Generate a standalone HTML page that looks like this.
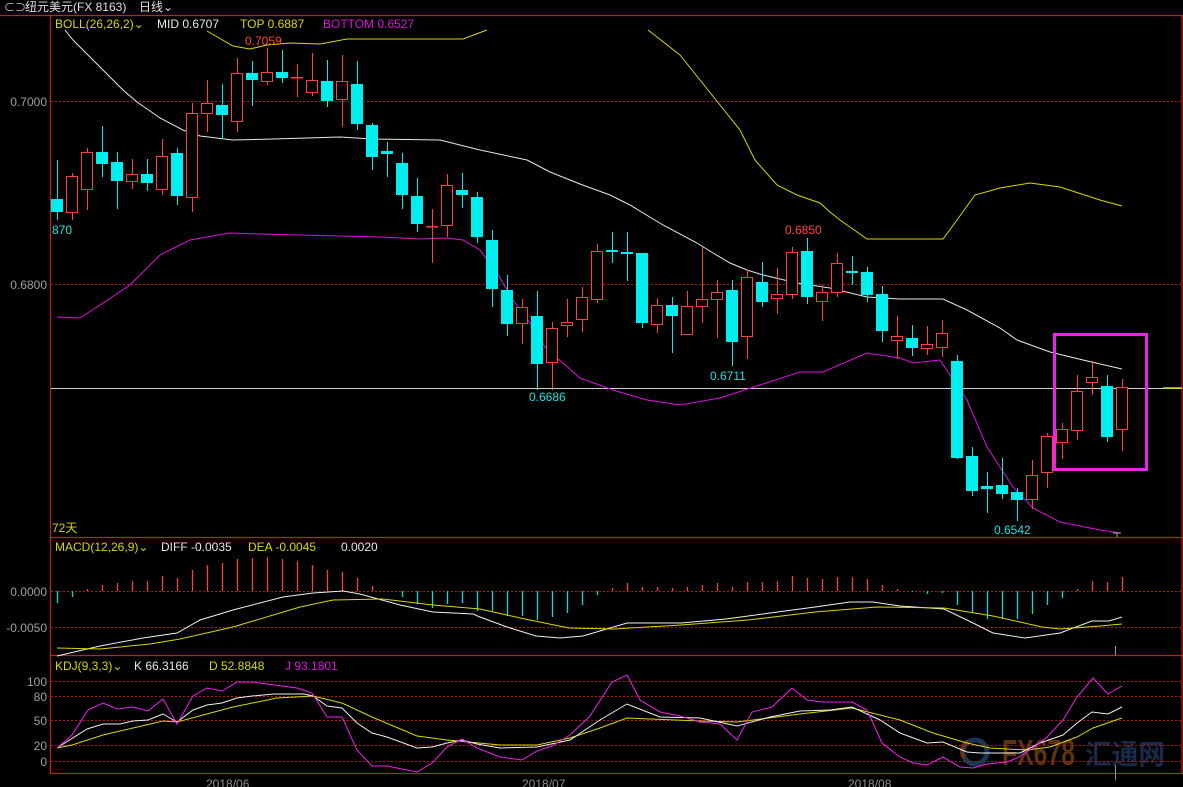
<!DOCTYPE html>
<html><head><meta charset="utf-8"><style>
html,body{margin:0;padding:0;background:#000;width:1183px;height:787px;overflow:hidden}
svg{display:block}
text{font-family:"Liberation Sans","Noto Sans CJK SC",sans-serif;font-size:12px}
</style></head><body>
<svg width="1183" height="787" viewBox="0 0 1183 787" xmlns="http://www.w3.org/2000/svg">
<rect width="1183" height="787" fill="#000"/>
<text x="4" y="11" fill="#c8c8c8" style="font-size:11px">⊂⊃</text>
<text x="25" y="11" fill="#e0e0e0">纽元美元(FX 8163)</text>
<text x="139" y="11" fill="#e0e0e0">日线⌄</text>
<!-- watermark (behind) -->
<g>
<circle cx="975" cy="752" r="12" fill="none" stroke="#1a3458" stroke-width="5"/>
<path d="M964,758 A12,12 0 0 1 968,741" fill="none" stroke="#6a3410" stroke-width="4"/>
<text x="1002" y="765" fill="#5e3210" textLength="73" lengthAdjust="spacingAndGlyphs" style="font-size:36px;font-weight:bold">FX678</text>
<text x="1085" y="764" fill="#182a48" textLength="80" lengthAdjust="spacingAndGlyphs" style="font-size:28px;font-weight:bold">汇通网</text>
</g>
<g stroke="#c81e1e" stroke-width="1.2" fill="none">
<line x1="0" y1="15.5" x2="1183" y2="15.5"/>
<line x1="50.5" y1="15" x2="50.5" y2="773"/>
<line x1="1182" y1="15" x2="1182" y2="773"/>
<line x1="50" y1="537.5" x2="1183" y2="537.5"/>
<line x1="50" y1="655.5" x2="1183" y2="655.5"/>
<line x1="50" y1="773.5" x2="1183" y2="773.5"/>
</g>
<g stroke="#b01818" stroke-width="1" stroke-dasharray="2,2">
<line x1="51" y1="101.5" x2="1182" y2="101.5"/>
<line x1="51" y1="284.5" x2="1182" y2="284.5"/>
<line x1="51" y1="591.5" x2="1182" y2="591.5"/>
<line x1="51" y1="627.5" x2="1182" y2="627.5"/>
<line x1="51" y1="681.5" x2="1182" y2="681.5"/>
<line x1="51" y1="696.5" x2="1182" y2="696.5"/>
<line x1="51" y1="720.5" x2="1182" y2="720.5"/>
<line x1="51" y1="745.5" x2="1182" y2="745.5"/>
<line x1="51" y1="761.5" x2="1182" y2="761.5"/>
</g>
<g fill="#a0a0a0" text-anchor="end">
<text x="47" y="106">0.7000</text>
<text x="47" y="289">0.6800</text>
<text x="47" y="596">0.0000</text>
<text x="47" y="632">-0.0050</text>
<text x="47" y="686">100</text>
<text x="47" y="701">80</text>
<text x="47" y="725">50</text>
<text x="47" y="750">20</text>
<text x="47" y="766">0</text>
</g>
<g fill="#909090">
<text x="206" y="788">2018/06</text>
<text x="522" y="788">2018/07</text>
<text x="848" y="788">2018/08</text>
</g>
<line x1="51" y1="388.5" x2="1182" y2="388.5" stroke="#d0d0d0" stroke-width="1"/>
<line x1="1163" y1="388" x2="1182" y2="388" stroke="#d8d800" stroke-width="1.5"/>
<polyline fill="none" stroke="#e8e8e8" stroke-width="1" points="65,30 73,40 93,60 123,90 137,102 160,118 183,130 200,136 233,140 273,139 340,137 373,139 440,140 480,150 527,160 550,172 580,184 610,195 630,205 663,225 697,243 713,253 730,263 747,270 763,275 797,283 830,288 867,297 900,299 943,299 967,310 1000,328 1017,340 1050,352 1083,360 1122,369"/>
<polyline fill="none" stroke="#d8d800" stroke-width="1" points="207,31 233,46 250,49 267,45 290,43 320,44 347,39 420,39 463,39 487,30"/>
<polyline fill="none" stroke="#d8d800" stroke-width="1" points="648,30 680,55 700,80 720,105 740,130 755,160 777,185 797,195 820,203 830,212 840,220 867,239 943,239 957,220 975,195 1000,188 1030,183 1060,187 1100,200 1122,206"/>
<polyline fill="none" stroke="#e010e0" stroke-width="1" points="57,317 80,318 100,305 130,285 160,255 190,240 230,233 260,234 300,235 380,237 420,239 447,238 463,240 480,250 497,273 513,300 530,323 547,350 563,363 580,378 613,390 647,400 680,405 720,398 760,385 800,372 823,372 867,353 900,358 913,363 940,360 967,400 987,447 1013,487 1033,508 1060,522 1100,530 1120,533"/>
<line x1="1117" y1="533" x2="1117" y2="537" stroke="#aaa"/>
<line x1="1113" y1="533" x2="1121" y2="533" stroke="#aaa"/>
<g stroke-width="1">
<g stroke="#00eeee">
<line x1="57.5" y1="160" x2="57.5" y2="220"/><line x1="102.5" y1="126" x2="102.5" y2="177"/><line x1="117.5" y1="152" x2="117.5" y2="209"/><line x1="147.5" y1="159" x2="147.5" y2="191"/><line x1="177.5" y1="148" x2="177.5" y2="205"/><line x1="222.5" y1="84" x2="222.5" y2="139"/><line x1="252.5" y1="61" x2="252.5" y2="106"/><line x1="282.5" y1="50" x2="282.5" y2="83"/><line x1="327.5" y1="60" x2="327.5" y2="107"/><line x1="357.5" y1="61" x2="357.5" y2="130"/><line x1="372.5" y1="123" x2="372.5" y2="170"/><line x1="387.5" y1="142" x2="387.5" y2="177"/><line x1="402.5" y1="153" x2="402.5" y2="209"/><line x1="417.5" y1="178" x2="417.5" y2="232"/><line x1="462.5" y1="173" x2="462.5" y2="208"/><line x1="477.5" y1="192" x2="477.5" y2="243"/><line x1="492.5" y1="230" x2="492.5" y2="307"/><line x1="507.5" y1="275" x2="507.5" y2="336"/><line x1="537.5" y1="291" x2="537.5" y2="390"/><line x1="612.5" y1="232" x2="612.5" y2="263"/><line x1="627.5" y1="232" x2="627.5" y2="281"/><line x1="642.5" y1="253" x2="642.5" y2="328"/><line x1="672.5" y1="297" x2="672.5" y2="353"/><line x1="732.5" y1="280" x2="732.5" y2="366"/><line x1="762.5" y1="262" x2="762.5" y2="307"/><line x1="807.5" y1="238" x2="807.5" y2="304"/><line x1="852.5" y1="256" x2="852.5" y2="285"/><line x1="867.5" y1="267" x2="867.5" y2="302"/><line x1="882.5" y1="286" x2="882.5" y2="342"/><line x1="912.5" y1="325" x2="912.5" y2="356"/><line x1="957.5" y1="355" x2="957.5" y2="459"/><line x1="972.5" y1="447" x2="972.5" y2="496"/><line x1="987.5" y1="472" x2="987.5" y2="513"/><line x1="1002.5" y1="458" x2="1002.5" y2="499"/><line x1="1017.5" y1="488" x2="1017.5" y2="521"/><line x1="1107.5" y1="375" x2="1107.5" y2="442"/>
</g>
<g stroke="#ff4040">
<line x1="72.5" y1="173" x2="72.5" y2="220"/><line x1="87.5" y1="148" x2="87.5" y2="210"/><line x1="132.5" y1="159" x2="132.5" y2="189"/><line x1="162.5" y1="139" x2="162.5" y2="195"/><line x1="192.5" y1="103" x2="192.5" y2="212"/><line x1="207.5" y1="80" x2="207.5" y2="132"/><line x1="237.5" y1="58" x2="237.5" y2="132"/><line x1="267.5" y1="48" x2="267.5" y2="85"/><line x1="297.5" y1="64" x2="297.5" y2="97"/><line x1="312.5" y1="53" x2="312.5" y2="96"/><line x1="342.5" y1="55" x2="342.5" y2="127"/><line x1="432.5" y1="209" x2="432.5" y2="263"/><line x1="447.5" y1="174" x2="447.5" y2="237"/><line x1="522.5" y1="299" x2="522.5" y2="344"/><line x1="552.5" y1="322" x2="552.5" y2="390"/><line x1="567.5" y1="299" x2="567.5" y2="337"/><line x1="582.5" y1="287" x2="582.5" y2="332"/><line x1="597.5" y1="244" x2="597.5" y2="303"/><line x1="657.5" y1="298" x2="657.5" y2="333"/><line x1="687.5" y1="291" x2="687.5" y2="334"/><line x1="702.5" y1="247" x2="702.5" y2="323"/><line x1="717.5" y1="280" x2="717.5" y2="338"/><line x1="747.5" y1="270" x2="747.5" y2="359"/><line x1="777.5" y1="268" x2="777.5" y2="314"/><line x1="792.5" y1="247" x2="792.5" y2="299"/><line x1="822.5" y1="285" x2="822.5" y2="321"/><line x1="837.5" y1="253" x2="837.5" y2="297"/><line x1="897.5" y1="316" x2="897.5" y2="359"/><line x1="927.5" y1="326" x2="927.5" y2="355"/><line x1="942.5" y1="320" x2="942.5" y2="357"/><line x1="1032.5" y1="460" x2="1032.5" y2="509"/><line x1="1047.5" y1="433" x2="1047.5" y2="488"/><line x1="1062.5" y1="423" x2="1062.5" y2="459"/><line x1="1077.5" y1="375" x2="1077.5" y2="440"/><line x1="1092.5" y1="361" x2="1092.5" y2="395"/><line x1="1122.5" y1="379" x2="1122.5" y2="451"/>
</g>
</g>
<g fill="#00eeee">
<rect x="51" y="199" width="12" height="13"/><rect x="96" y="152" width="12" height="12"/><rect x="111" y="162" width="12" height="19"/><rect x="141" y="174" width="12" height="9"/><rect x="171" y="153" width="12" height="43"/><rect x="216" y="105" width="12" height="10"/><rect x="246" y="73" width="12" height="7"/><rect x="276" y="72" width="12" height="6"/><rect x="321" y="81" width="12" height="20"/><rect x="351" y="84" width="12" height="40"/><rect x="366" y="125" width="12" height="32"/><rect x="381" y="151" width="12" height="3"/><rect x="396" y="163" width="12" height="32"/><rect x="411" y="196" width="12" height="28"/><rect x="456" y="190" width="12" height="5"/><rect x="471" y="197" width="12" height="40"/><rect x="486" y="240" width="12" height="49"/><rect x="501" y="290" width="12" height="34"/><rect x="531" y="316" width="12" height="48"/><rect x="606" y="250" width="12" height="2"/><rect x="621" y="252" width="12" height="2"/><rect x="636" y="253" width="12" height="70"/><rect x="666" y="305" width="12" height="11"/><rect x="726" y="290" width="12" height="52"/><rect x="756" y="282" width="12" height="20"/><rect x="801" y="251" width="12" height="46"/><rect x="846" y="271" width="12" height="2"/><rect x="861" y="272" width="12" height="23"/><rect x="876" y="294" width="12" height="37"/><rect x="906" y="338" width="12" height="10"/><rect x="951" y="361" width="12" height="97"/><rect x="966" y="456" width="12" height="35"/><rect x="981" y="486" width="12" height="3"/><rect x="996" y="485" width="12" height="9"/><rect x="1011" y="492" width="12" height="8"/><rect x="1101" y="386" width="12" height="51"/>
</g>
<g fill="#000" stroke="#ff4040" stroke-width="1">
<rect x="66.5" y="176.5" width="11" height="36"/><rect x="81.5" y="152.5" width="11" height="37"/><rect x="126.5" y="174.5" width="11" height="7"/><rect x="156.5" y="156.5" width="11" height="33"/><rect x="186.5" y="113.5" width="11" height="84"/><rect x="201.5" y="103.5" width="11" height="10"/><rect x="231.5" y="73.5" width="11" height="48"/><rect x="261.5" y="72.5" width="11" height="9"/><rect x="291.5" y="77.5" width="11" height="0.5"/><rect x="306.5" y="80.5" width="11" height="12"/><rect x="336.5" y="81.5" width="11" height="18"/><rect x="426.5" y="226.5" width="11" height="0.5"/><rect x="441.5" y="185.5" width="11" height="40"/><rect x="516.5" y="307.5" width="11" height="16"/><rect x="546.5" y="328.5" width="11" height="34"/><rect x="561.5" y="322.5" width="11" height="3"/><rect x="576.5" y="297.5" width="11" height="22"/><rect x="591.5" y="251.5" width="11" height="48"/><rect x="651.5" y="305.5" width="11" height="19"/><rect x="681.5" y="306.5" width="11" height="28"/><rect x="696.5" y="299.5" width="11" height="7"/><rect x="711.5" y="292.5" width="11" height="7"/><rect x="741.5" y="277.5" width="11" height="59"/><rect x="771.5" y="294.5" width="11" height="4"/><rect x="786.5" y="252.5" width="11" height="42"/><rect x="816.5" y="292.5" width="11" height="9"/><rect x="831.5" y="263.5" width="11" height="29"/><rect x="891.5" y="336.5" width="11" height="4"/><rect x="921.5" y="344.5" width="11" height="4"/><rect x="936.5" y="333.5" width="11" height="14"/><rect x="1026.5" y="475.5" width="11" height="24"/><rect x="1041.5" y="436.5" width="11" height="36"/><rect x="1056.5" y="429.5" width="11" height="13"/><rect x="1071.5" y="391.5" width="11" height="39"/><rect x="1086.5" y="377.5" width="11" height="5"/><rect x="1116.5" y="387.5" width="11" height="42"/>
</g>
<rect x="1054.5" y="334.5" width="92" height="135" fill="none" stroke="#ee22ee" stroke-width="3"/>
<text x="245" y="45" fill="#ff4040">0.7059</text>
<text x="52" y="234" fill="#20e0e0">870</text>
<text x="529" y="401" fill="#20e0e0">0.6686</text>
<text x="710" y="380" fill="#20e0e0">0.6711</text>
<text x="785" y="234" fill="#ff4040">0.6850</text>
<text x="994" y="534" fill="#20e0e0">0.6542</text>
<text x="52" y="532" fill="#d8d800">72天</text>
<text x="55" y="28" fill="#d8d800">BOLL(26,26,2)⌄</text>
<text x="157" y="28" fill="#e8e8e8">MID 0.6707</text>
<text x="240" y="28" fill="#d8d800">TOP 0.6887</text>
<text x="323" y="28" fill="#e010e0">BOTTOM 0.6527</text>
<text x="55" y="551" fill="#d8d800">MACD(12,26,9)⌄</text>
<text x="161" y="551" fill="#e8e8e8">DIFF -0.0035</text>
<text x="248" y="551" fill="#d8d800">DEA -0.0045</text>
<text x="341" y="551" fill="#e8e8e8">0.0020</text>
<text x="55" y="670" fill="#d8d800">KDJ(9,3,3)⌄</text>
<text x="134" y="670" fill="#e8e8e8">K 66.3166</text>
<text x="209" y="670" fill="#d8d800">D 52.8848</text>
<text x="285" y="670" fill="#e010e0">J 93.1801</text>
<g stroke-width="1.3">
<g stroke="#00dddd">
<line x1="57.5" y1="591" x2="57.5" y2="603"/><line x1="72.5" y1="591" x2="72.5" y2="597"/>
<line x1="402.5" y1="591" x2="402.5" y2="597"/><line x1="417.5" y1="591" x2="417.5" y2="604"/><line x1="432.5" y1="591" x2="432.5" y2="608"/><line x1="447.5" y1="591" x2="447.5" y2="604"/><line x1="462.5" y1="591" x2="462.5" y2="603"/><line x1="477.5" y1="591" x2="477.5" y2="611"/>
<line x1="492.5" y1="591" x2="492.5" y2="611"/><line x1="507.5" y1="591" x2="507.5" y2="616"/><line x1="522.5" y1="591" x2="522.5" y2="616"/><line x1="537.5" y1="591" x2="537.5" y2="620"/><line x1="552.5" y1="591" x2="552.5" y2="617"/><line x1="567.5" y1="591" x2="567.5" y2="613"/><line x1="582.5" y1="591" x2="582.5" y2="605"/><line x1="597.5" y1="591" x2="597.5" y2="595"/>
<line x1="912.5" y1="591" x2="912.5" y2="592"/><line x1="927.5" y1="591" x2="927.5" y2="594"/><line x1="942.5" y1="591" x2="942.5" y2="593"/><line x1="957.5" y1="591" x2="957.5" y2="605"/><line x1="972.5" y1="591" x2="972.5" y2="613"/><line x1="987.5" y1="591" x2="987.5" y2="619"/><line x1="1002.5" y1="591" x2="1002.5" y2="619"/><line x1="1017.5" y1="591" x2="1017.5" y2="619"/><line x1="1032.5" y1="591" x2="1032.5" y2="614"/><line x1="1047.5" y1="591" x2="1047.5" y2="605"/><line x1="1062.5" y1="591" x2="1062.5" y2="598"/>
</g>
<g stroke="#ff4040">
<line x1="87.5" y1="589" x2="87.5" y2="591"/><line x1="102.5" y1="585" x2="102.5" y2="591"/><line x1="117.5" y1="583" x2="117.5" y2="591"/><line x1="132.5" y1="581" x2="132.5" y2="591"/><line x1="147.5" y1="581" x2="147.5" y2="591"/><line x1="162.5" y1="576" x2="162.5" y2="591"/><line x1="177.5" y1="578" x2="177.5" y2="591"/><line x1="192.5" y1="570" x2="192.5" y2="591"/><line x1="207.5" y1="565" x2="207.5" y2="591"/><line x1="222.5" y1="563" x2="222.5" y2="591"/><line x1="237.5" y1="559" x2="237.5" y2="591"/><line x1="252.5" y1="558" x2="252.5" y2="591"/><line x1="267.5" y1="557" x2="267.5" y2="591"/><line x1="282.5" y1="559" x2="282.5" y2="591"/><line x1="297.5" y1="561" x2="297.5" y2="591"/><line x1="312.5" y1="565" x2="312.5" y2="591"/><line x1="327.5" y1="570" x2="327.5" y2="591"/><line x1="342.5" y1="572" x2="342.5" y2="591"/><line x1="357.5" y1="578" x2="357.5" y2="591"/><line x1="372.5" y1="586" x2="372.5" y2="591"/>
<line x1="612.5" y1="588" x2="612.5" y2="591"/><line x1="627.5" y1="583" x2="627.5" y2="591"/><line x1="642.5" y1="587" x2="642.5" y2="591"/><line x1="657.5" y1="587" x2="657.5" y2="591"/><line x1="672.5" y1="588" x2="672.5" y2="591"/><line x1="687.5" y1="587" x2="687.5" y2="591"/><line x1="702.5" y1="585" x2="702.5" y2="591"/><line x1="717.5" y1="583" x2="717.5" y2="591"/><line x1="732.5" y1="587" x2="732.5" y2="591"/><line x1="747.5" y1="582" x2="747.5" y2="591"/><line x1="762.5" y1="582" x2="762.5" y2="591"/><line x1="777.5" y1="581" x2="777.5" y2="591"/><line x1="792.5" y1="576" x2="792.5" y2="591"/><line x1="807.5" y1="578" x2="807.5" y2="591"/><line x1="822.5" y1="579" x2="822.5" y2="591"/><line x1="837.5" y1="577" x2="837.5" y2="591"/><line x1="852.5" y1="577" x2="852.5" y2="591"/><line x1="867.5" y1="579" x2="867.5" y2="591"/><line x1="882.5" y1="585" x2="882.5" y2="591"/><line x1="897.5" y1="589" x2="897.5" y2="591"/>
<line x1="1077.5" y1="589" x2="1077.5" y2="591"/><line x1="1092.5" y1="581" x2="1092.5" y2="591"/><line x1="1107.5" y1="582" x2="1107.5" y2="591"/><line x1="1122.5" y1="577" x2="1122.5" y2="591"/>
</g>
</g>
<line x1="1115.5" y1="646" x2="1115.5" y2="655" stroke="#999"/>
<line x1="1115.5" y1="765" x2="1115.5" y2="780" stroke="#999"/>
<polyline fill="none" stroke="#f0f0f0" stroke-width="1" points="57,656 100,646 143,638 177,633 200,620 233,610 283,597 313,593 343,591 360,594 400,605 433,612 473,614 480,617 507,627 536,636 560,638 583,636 627,623 681,623 726,619 770,613 815,607 850,602 873,602 900,606 944,609 971,622 993,633 1025,638 1060,633 1092,621 1109,621 1122,617"/>
<polyline fill="none" stroke="#d8d800" stroke-width="1" points="57,648 100,649 150,644 180,639 233,627 300,607 333,600 383,599 433,605 480,609 525,619 569,628 614,629 681,625 748,620 815,612 877,607 944,608 993,616 1042,627 1060,629 1100,626 1122,624"/>
<polyline fill="none" stroke="#d8d800" stroke-width="1" points="57,748 72,745 103,735 133,728 163,721 177,722 233,707 277,698 313,696 342,703 372,717 417,736 447,740 500,745 537,745 570,738 600,728 627,718 700,721 737,722 800,714 852,708 900,720 933,733 967,743 990,748 1027,750 1050,747 1077,737 1093,728 1122,718"/>
<polyline fill="none" stroke="#f0f0f0" stroke-width="1" points="57,748 87,729 103,724 120,724 133,721 148,720 163,714 177,722 193,710 207,705 222,703 237,698 252,696 274,694 304,694 313,696 327,706 342,708 357,723 372,733 387,737 417,748 432,747 447,743 462,740 477,744 500,748 537,747 570,740 600,720 627,704 660,717 700,718 737,726 770,717 800,711 830,710 852,707 880,720 900,733 927,743 943,742 967,752 980,753 1020,753 1040,743 1063,735 1077,723 1092,712 1108,714 1122,707"/>
<polyline fill="none" stroke="#ee22ee" stroke-width="1" points="57,748 72,735 88,710 103,703 117,709 133,707 148,711 163,699 177,724 193,696 207,688 222,691 237,682 252,682 267,684 297,688 312,693 327,717 342,717 357,750 372,766 387,766 417,772 432,763 447,747 462,739 477,748 500,757 522,760 537,751 552,746 570,735 590,716 612,682 627,675 640,700 660,712 680,716 700,722 720,724 737,740 752,712 772,707 792,688 807,700 822,702 852,702 867,710 882,743 900,757 913,763 927,765 943,757 960,767 973,768 987,764 1007,762 1017,758 1033,748 1047,737 1063,720 1077,697 1093,678 1108,694 1122,686"/>
</svg>
</body></html>
